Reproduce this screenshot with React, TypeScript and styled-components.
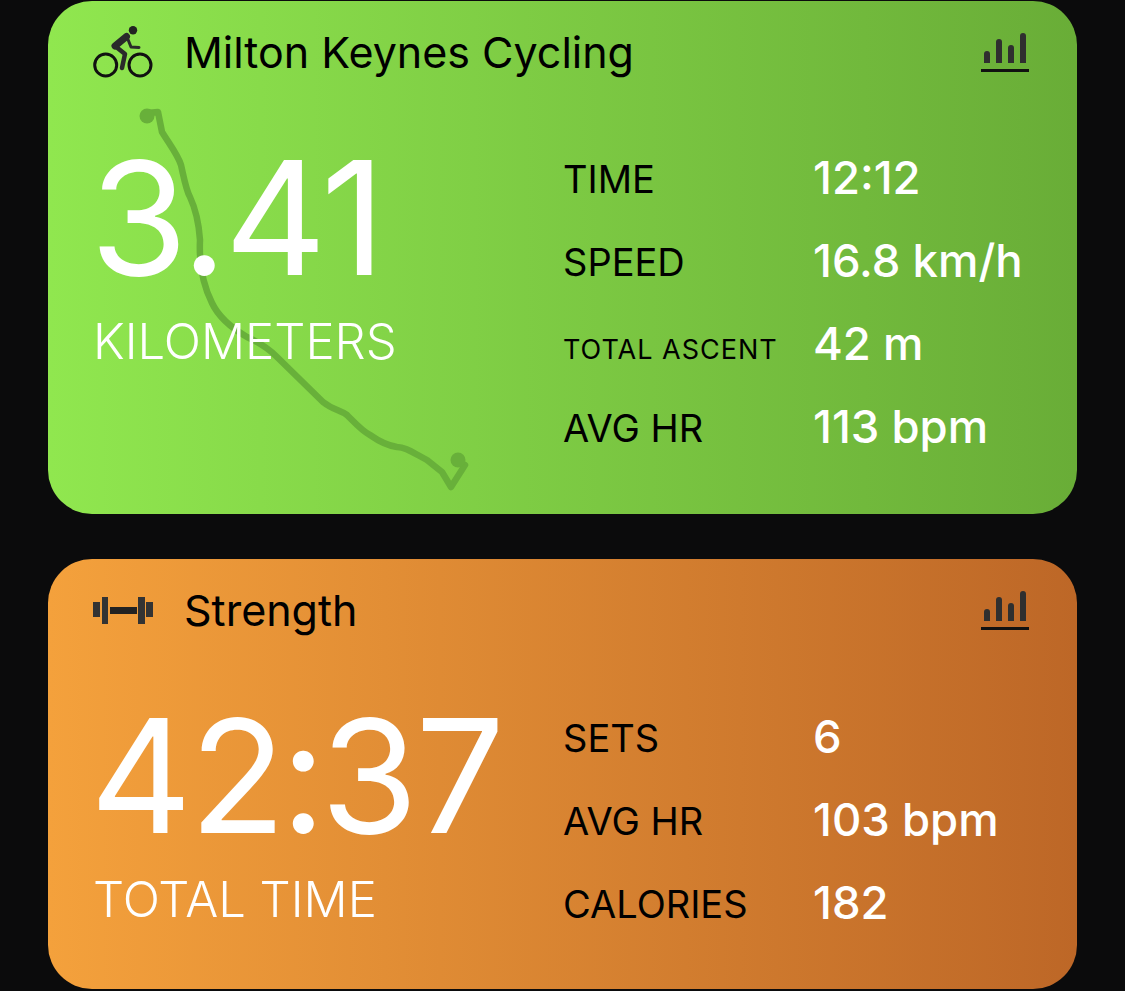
import * as React from 'react';
import styled, { createGlobalStyle } from 'styled-components';

const GlobalStyle = createGlobalStyle`
  html, body {
    margin: 0;
    padding: 0;
    background: #0b0b0c;
  }
  body {
    font-family: Inter, "Noto Sans", "Liberation Sans", sans-serif;
    font-optical-sizing: none;
    overflow: hidden;
  }
`;

const Page = styled.div`
  width: 1125px;
  height: 991px;
  padding: 1px 48px 0;
  box-sizing: border-box;
  display: flex;
  flex-direction: column;
  gap: 45px;
`;

const Card = styled.section<{ $from: string; $to: string; $height: number }>`
  position: relative;
  height: ${p => p.$height}px;
  border-radius: 44px;
  background: linear-gradient(90deg, ${p => p.$from}, ${p => p.$to});
  padding: 0 48px 0 45px;
  box-sizing: border-box;
  overflow: hidden;
`;

const Header = styled.header<{ $height: number }>`
  position: relative;
  height: ${p => p.$height}px;
  display: flex;
  align-items: center;
  color: #000;
`;

const IconSlot = styled.div`
  width: 91px;
  display: flex;
  align-items: center;
`;

const Title = styled.h2`
  flex: 1;
  margin: 0;
  font-size: 43px;
  font-weight: 400;
`;

const Body = styled.div`
  position: relative;
  display: grid;
  grid-template-columns: 470px 1fr;
`;

const Primary = styled.div<{ $top: number }>`
  padding-top: ${p => p.$top}px;
  color: #fff;
`;

const BigValue = styled.div`
  margin-left: -3px;
  font-size: 158px;
  font-weight: 380;
  line-height: 150px;
  letter-spacing: -2.5px;
`;

const BigSeparator = styled.span`
  margin: 0 -3px;
`;

const BigLabel = styled.div<{ $gap: number }>`
  margin-top: ${p => p.$gap}px;
  font-size: 49px;
  font-weight: 300;
  line-height: 50px;
`;

const Stats = styled.div<{ $top: number }>`
  padding-top: ${p => p.$top}px;
  display: flex;
  flex-direction: column;
`;

const Stat = styled.div`
  height: 83px;
  display: grid;
  grid-template-columns: 250px 1fr;
  align-items: center;
`;

const StatLabel = styled.div<{ $small?: boolean }>`
  color: #000;
  font-size: ${p => (p.$small ? 27 : 38)}px;
  letter-spacing: ${p => (p.$small ? 1 : 0)}px;
  padding-top: ${p => (p.$small ? 9 : 0)}px;
  font-weight: 400;
`;

const StatValue = styled.div`
  color: #fff;
  font-size: 45.5px;
  font-weight: 500;
  padding-bottom: 3px;
`;

const RouteSvg = styled.svg`
  position: absolute;
  left: 0;
  top: 0;
`;

const ChartLink = styled.svg`
  display: block;
`;

const Route = () => (
  <RouteSvg width="1029" height="513" viewBox="48 1 1029 513" fill="none">
    <path
      d="M147 113 L158 112 L162 132 C170 145 178 155 181 165 C184 178 186 190 190 197 C197 212 199 225 200 240 C199 262 203 285 212 303 C220 320 235 330 247 337 C258 342 268 348 277 357 L323 402 C333 410 340 410 347 415 C355 423 362 431 370 435 C380 442 390 446 397 447 C405 447 412 452 427 460 L442 472 L451 487 L465 465"
      stroke="#68b03a"
      strokeWidth="6.5"
      strokeLinejoin="round"
      strokeLinecap="round"
    />
    <circle cx="147" cy="116" r="7.5" fill="#68b03a" />
    <circle cx="458" cy="460" r="7.5" fill="#68b03a" />
  </RouteSvg>
);

const BikeIcon = () => (
  <svg width="60" height="52" viewBox="0 0 60 52" fill="none">
    <circle cx="12.7" cy="39" r="11" stroke="#111" strokeWidth="3" />
    <circle cx="47" cy="39" r="11" stroke="#111" strokeWidth="3" />
    <circle cx="40" cy="4.2" r="4.2" fill="#222" />
    <path d="M33.5 10.5 L22 20" stroke="#2a2a2a" strokeWidth="7" strokeLinecap="round" />
    <path
      d="M22 20 L32 28 L29 42"
      stroke="#2a2a2a"
      strokeWidth="4.5"
      strokeLinecap="round"
      strokeLinejoin="round"
    />
    <path
      d="M34 11 L38 21 L46 21.5"
      stroke="#2a2a2a"
      strokeWidth="3"
      strokeLinecap="round"
      strokeLinejoin="round"
    />
  </svg>
);

const DumbbellIcon = () => (
  <svg width="60" height="27" viewBox="0 0 60 27" fill="none">
    <rect x="0" y="5" width="7" height="15" fill="#333" />
    <rect x="9" y="0" width="6" height="27" fill="#333" />
    <rect x="17" y="10" width="27" height="7" fill="#222" />
    <rect x="45" y="0" width="7" height="27" fill="#333" />
    <rect x="53" y="5" width="7" height="15" fill="#333" />
  </svg>
);

const ChartIcon = () => (
  <ChartLink width="48" height="39" viewBox="0 0 48 39" fill="none">
    <g stroke="#2f2f2f" strokeWidth="6" strokeLinecap="round">
      <path d="M6 21 V27" />
      <path d="M18 9 V27" />
      <path d="M30 15 V27" />
      <path d="M42 3 V27" />
    </g>
    <g fill="#2f2f2f">
      <rect x="3" y="26" width="6" height="4" />
      <rect x="15" y="26" width="6" height="4" />
      <rect x="27" y="26" width="6" height="4" />
      <rect x="39" y="26" width="6" height="4" />
    </g>
    <rect x="0" y="36" width="48" height="3" fill="#111" />
  </ChartLink>
);

export default function App() {
  return (
    <>
      <GlobalStyle />
      <Page>
        <Card $from="#90e74f" $to="#69ad37" $height={513}>
          <Route />
          <Header $height={102}>
            <IconSlot>
              <BikeIcon />
            </IconSlot>
            <Title>Milton Keynes Cycling</Title>
            <ChartIcon />
          </Header>
          <Body>
            <Primary $top={40}>
              <BigValue>3.41</BigValue>
              <BigLabel $gap={24}>KILOMETERS</BigLabel>
            </Primary>
            <Stats $top={34}>
              <Stat>
                <StatLabel>TIME</StatLabel>
                <StatValue>12:12</StatValue>
              </Stat>
              <Stat>
                <StatLabel>SPEED</StatLabel>
                <StatValue>16.8 km/h</StatValue>
              </Stat>
              <Stat>
                <StatLabel $small>TOTAL ASCENT</StatLabel>
                <StatValue>42 m</StatValue>
              </Stat>
              <Stat>
                <StatLabel>AVG HR</StatLabel>
                <StatValue>113 bpm</StatValue>
              </Stat>
            </Stats>
          </Body>
        </Card>
        <Card $from="#f4a13c" $to="#bd6727" $height={430}>
          <Header $height={102}>
            <IconSlot>
              <DumbbellIcon />
            </IconSlot>
            <Title>Strength</Title>
            <ChartIcon />
          </Header>
          <Body>
            <Primary $top={40}>
              <BigValue>
                42<BigSeparator>:</BigSeparator>37
              </BigValue>
              <BigLabel $gap={24}>TOTAL TIME</BigLabel>
            </Primary>
            <Stats $top={35}>
              <Stat>
                <StatLabel>SETS</StatLabel>
                <StatValue>6</StatValue>
              </Stat>
              <Stat>
                <StatLabel>AVG HR</StatLabel>
                <StatValue>103 bpm</StatValue>
              </Stat>
              <Stat>
                <StatLabel>CALORIES</StatLabel>
                <StatValue>182</StatValue>
              </Stat>
            </Stats>
          </Body>
        </Card>
      </Page>
    </>
  );
}
